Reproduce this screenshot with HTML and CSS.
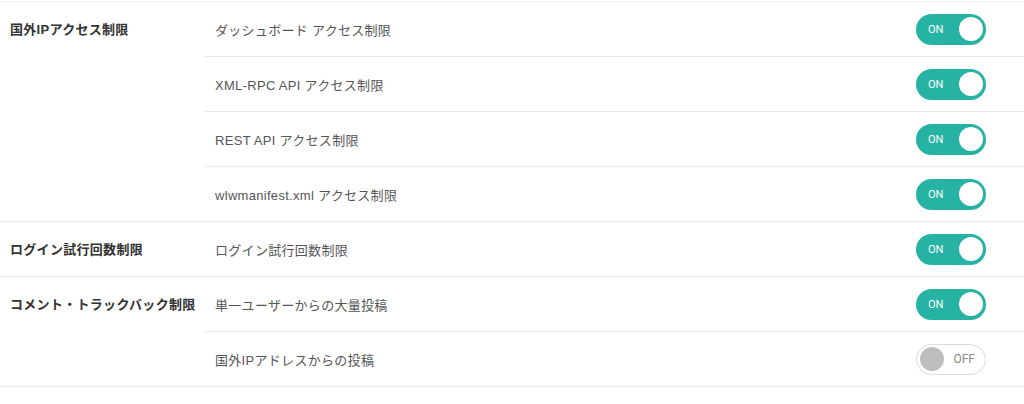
FILE: index.html
```
<!DOCTYPE html>
<html>
<head>
<meta charset="utf-8">
<link rel="stylesheet" href="styles.css">
</head>
<body>
    <div class="settings">
        <div class="group">
            <div class="group-label">国外IPアクセス制限</div>
            <div class="items">
                <div class="item"><span class="item-name">ダッシュボード アクセス制限</span><span class="toggle on"><span class="toggle-text">ON</span><span class="knob"></span></span></div>
                <div class="item"><span class="item-name">XML-RPC API アクセス制限</span><span class="toggle on"><span class="toggle-text">ON</span><span class="knob"></span></span></div>
                <div class="item"><span class="item-name">REST API アクセス制限</span><span class="toggle on"><span class="toggle-text">ON</span><span class="knob"></span></span></div>
                <div class="item"><span class="item-name">wlwmanifest.xml アクセス制限</span><span class="toggle on"><span class="toggle-text">ON</span><span class="knob"></span></span></div>
            </div>
        </div>
        <div class="group">
            <div class="group-label">ログイン試行回数制限</div>
            <div class="items">
                <div class="item"><span class="item-name">ログイン試行回数制限</span><span class="toggle on"><span class="toggle-text">ON</span><span class="knob"></span></span></div>
            </div>
        </div>
        <div class="group">
            <div class="group-label">コメント・トラックバック制限</div>
            <div class="items">
                <div class="item"><span class="item-name">単一ユーザーからの大量投稿</span><span class="toggle on"><span class="toggle-text">ON</span><span class="knob"></span></span></div>
                <div class="item"><span class="item-name">国外IPアドレスからの投稿</span><span class="toggle off"><span class="knob"></span><span class="toggle-text">OFF</span></span></div>
            </div>
        </div>
    </div>
</body>
</html>
```
FILE: styles.css
```
body {
    margin: 0;
    padding-top: 1px;
    background: #fff;
    font-family: "Liberation Sans", "Noto Sans CJK JP", sans-serif;
    font-size: 13px;
}
.settings {
    border-top: 1px solid #f0f0f0;
}
.group {
    display: grid;
    grid-template-columns: 204px 1fr;
    border-bottom: 1px solid #ebebeb;
}
.group-label {
    display: flex;
    align-items: center;
    padding-left: 10px;
    height: 53px;
    padding-bottom: 1px;
    font-weight: bold;
    letter-spacing: 0.3px;
    color: #333;
}
.item {
    display: flex;
    align-items: center;
    justify-content: space-between;
    height: 54px;
    padding: 0 38px 0 11px;
    color: #555;
}
.item-name {
    letter-spacing: 0.3px;
}
.item + .item {
    border-top: 1px solid #ebebeb;
}
.toggle {
    display: flex;
    align-items: center;
    justify-content: space-between;
    box-sizing: border-box;
    width: 70px;
    height: 31px;
    border-radius: 16px;
    font-family: Roboto, sans-serif;
}
.toggle.on {
    background: #27b3a4;
    color: #fff;
    font-size: 11px;
    padding: 0 3px 0 12px;
}
.toggle.off {
    background: #fff;
    border: 1px solid #dcdcdc;
    color: #888;
    font-size: 12px;
    padding: 0 10px 0 3px;
}
.knob {
    width: 24px;
    height: 24px;
    border-radius: 50%;
    background: #fff;
}
.toggle.off .knob {
    background: #bdbdbd;
}
```
